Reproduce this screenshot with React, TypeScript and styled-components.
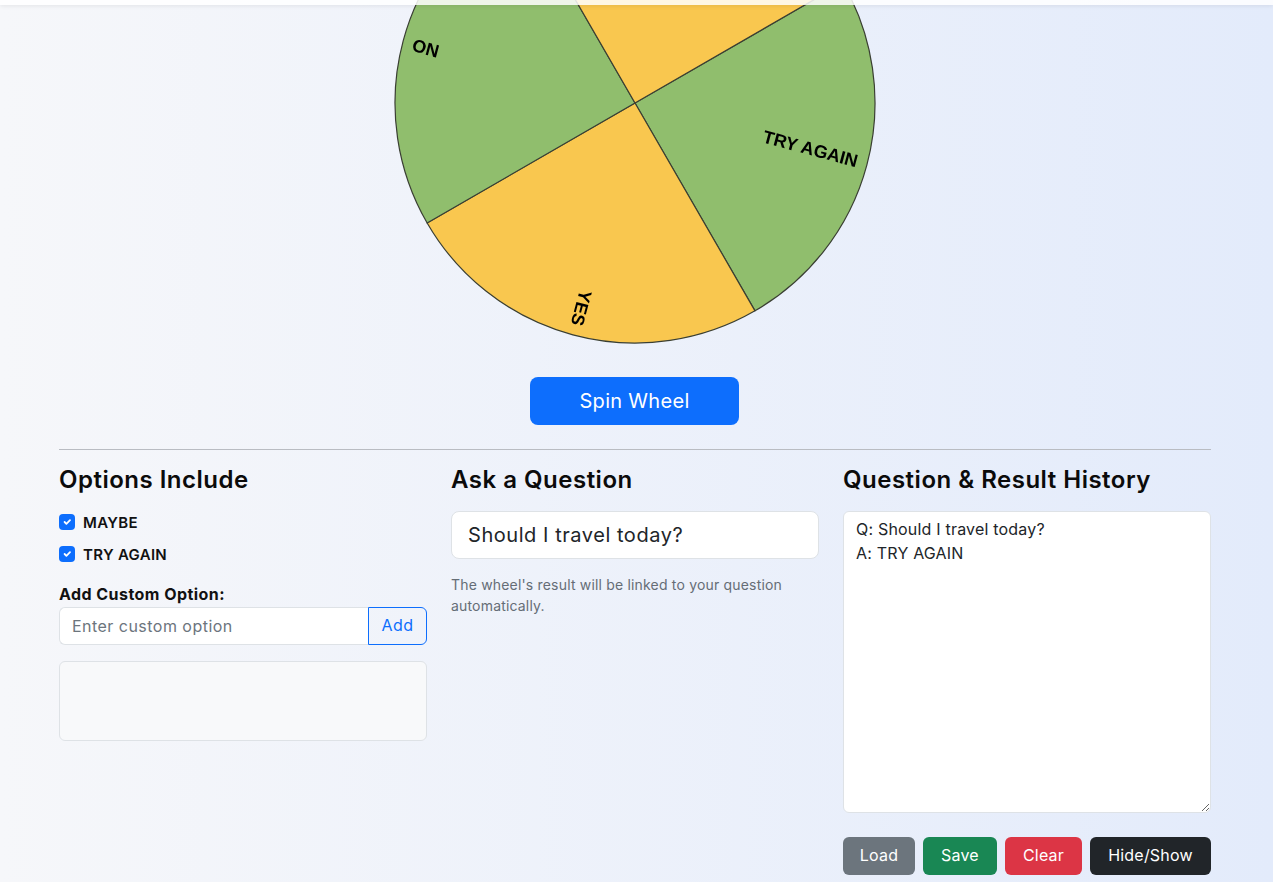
import styled, { createGlobalStyle } from 'styled-components';

const CX = 241;
const R = 240;

const segments = [
  { label: 'TRY AGAIN', from: -30, color: '#90be6d' },
  { label: 'YES', from: 60, color: '#f9c74f' },
  { label: 'NO', from: 150, color: '#90be6d' },
  { label: 'MAYBE', from: 240, color: '#f9c74f' },
];

const point = (deg: number) => {
  const a = (deg * Math.PI) / 180;
  return `${CX + R * Math.cos(a)} ${CX + R * Math.sin(a)}`;
};

const Wheel = () => (
  <WheelSvg width="482" height="482" viewBox="0 0 482 482">
    {segments.map((s) => (
      <g key={s.label}>
        <path
          d={`M${CX} ${CX} L${point(s.from)} A${R} ${R} 0 0 1 ${point(s.from + 90)} Z`}
          fill={s.color}
          stroke="#3a3f33"
          strokeWidth="1.2"
        />
        <text
          transform={`translate(${CX} ${CX}) rotate(${s.from + 45})`}
          x="230"
          dy="5"
          textAnchor="end"
          fontFamily="'Liberation Sans', Arial, sans-serif"
          fontWeight="700"
          fontSize="18"
          fill="#000"
        >
          {s.label}
        </text>
      </g>
    ))}
  </WheelSvg>
);

const Tick = () => (
  <svg width="12" height="12" viewBox="0 0 20 20">
    <path d="M6 10l3 3 6-6" fill="none" stroke="#fff" strokeWidth="3" strokeLinecap="round" strokeLinejoin="round" />
  </svg>
);

const App = () => {
  return (
    <>
      <GlobalStyle />
      <TopBar />
      <Page>
        <WheelArea>
          <Wheel />
        </WheelArea>
        <SpinRow>
          <SpinButton>Spin Wheel</SpinButton>
        </SpinRow>
        <Divider />
        <Columns>
          <Column>
            <Heading>Options Include</Heading>
            <CheckList>
              <CheckRow>
                <CheckBox>
                  <Tick />
                </CheckBox>
                MAYBE
              </CheckRow>
              <CheckRow>
                <CheckBox>
                  <Tick />
                </CheckBox>
                TRY AGAIN
              </CheckRow>
            </CheckList>
            <AddLabel>Add Custom Option:</AddLabel>
            <InputGroup>
              <CustomInput placeholder="Enter custom option" />
              <AddButton>Add</AddButton>
            </InputGroup>
            <CustomList />
          </Column>
          <Column>
            <Heading>Ask a Question</Heading>
            <QuestionInput defaultValue="Should I travel today?" />
            <Help>The wheel's result will be linked to your question automatically.</Help>
          </Column>
          <Column>
            <Heading>Question &amp; Result History</Heading>
            <History readOnly defaultValue={'Q: Should I travel today?\nA: TRY AGAIN'} />
            <Actions>
              <ActionButton $bg="#6c757d" $w={72}>Load</ActionButton>
              <ActionButton $bg="#198754" $w={74}>Save</ActionButton>
              <ActionButton $bg="#dc3545" $w={77}>Clear</ActionButton>
              <ActionButton $bg="#212529" $w={121}>Hide/Show</ActionButton>
            </Actions>
          </Column>
        </Columns>
      </Page>
    </>
  );
};

export default App;

const font = `Inter, 'Liberation Sans', Arial, sans-serif`;

const GlobalStyle = createGlobalStyle`
  html, body {
    margin: 0;
    height: 882px;
    overflow: hidden;
  }

  body {
    background: linear-gradient(90deg, #f6f7fa 0%, #e3ebfb 100%);
    font-family: ${font};
    color: #212529;
  }

  * {
    box-sizing: border-box;
  }
`;

const TopBar = styled.div`
  position: fixed;
  top: 0;
  left: 0;
  right: 0;
  z-index: 5;
  height: 5px;
  background: rgba(255, 255, 255, 0.85);
  box-shadow: 0 1px 4px rgba(0, 0, 0, 0.08);
`;

const Page = styled.div`
  width: 1152px;
  margin-left: 59px;
`;

const WheelArea = styled.div`
  height: 344px;
  overflow: hidden;
  display: flex;
  justify-content: center;
  align-items: flex-end;
`;

const WheelSvg = styled.svg`
  flex: none;
  filter: blur(0.25px);
`;

const SpinRow = styled.div`
  display: flex;
  justify-content: center;
  margin-top: 33px;
`;

const SpinButton = styled.button`
  width: 209px;
  height: 48px;
  margin-right: 1px;
  border: none;
  border-radius: 8px;
  background: #0d6efd;
  color: #fff;
  font-family: ${font};
  font-size: 20px;
  letter-spacing: 0.3px;
`;

const Divider = styled.hr`
  margin: 24px 0 15px;
  border: none;
  border-top: 1px solid #b9bcc2;
`;

const Columns = styled.div`
  display: grid;
  grid-template-columns: repeat(3, 368px);
  gap: 24px;
`;

const Column = styled.div`
  display: flex;
  flex-direction: column;
`;

const Heading = styled.h2`
  margin: 0 0 17px;
  font-size: 24px;
  line-height: 29px;
  font-weight: 600;
  letter-spacing: 0.5px;
  color: #0b0b0b;
`;

const CheckList = styled.div`
  display: flex;
  flex-direction: column;
  gap: 8px;
  margin-top: -1px;
`;

const CheckRow = styled.label`
  display: flex;
  align-items: center;
  gap: 8px;
  height: 24px;
  font-size: 15px;
  font-weight: 600;
  letter-spacing: 0.3px;
  color: #111;
`;

const CheckBox = styled.span`
  width: 16px;
  height: 16px;
  border-radius: 4px;
  background: #0d6efd;
  display: flex;
  align-items: center;
  justify-content: center;
`;

const AddLabel = styled.div`
  margin-top: 16px;
  font-size: 16px;
  line-height: 24px;
  font-weight: 700;
  letter-spacing: 0.45px;
  color: #111;
`;

const InputGroup = styled.div`
  display: flex;
  height: 38px;
  margin-top: 1px;
`;

const CustomInput = styled.input`
  flex: 1;
  min-width: 0;
  padding: 0 12px 1px;
  border: 1px solid #dee2e6;
  border-right: none;
  border-radius: 6px 0 0 6px;
  background: #fff;
  font-family: ${font};
  font-size: 16px;
  letter-spacing: 0.47px;
  color: #212529;

  &::placeholder {
    color: #6c757d;
    opacity: 1;
  }
`;

const AddButton = styled.button`
  width: 59px;
  padding: 0 0 2px;
  border: 1px solid #0d6efd;
  border-radius: 0 6px 6px 0;
  background: transparent;
  color: #0d6efd;
  font-family: ${font};
  font-size: 16px;
  letter-spacing: 0.5px;
`;

const CustomList = styled.div`
  height: 80px;
  margin-top: 16px;
  border: 1px solid #dee2e6;
  border-radius: 6px;
  background: #f8f9fa;
`;

const QuestionInput = styled.input`
  height: 48px;
  padding: 0 16px;
  border: 1px solid #dee2e6;
  border-radius: 8px;
  background: #fff;
  font-family: ${font};
  font-size: 20px;
  letter-spacing: 0.55px;
  color: #212529;
`;

const Help = styled.p`
  margin: 15px 0 0;
  font-size: 14px;
  line-height: 21px;
  letter-spacing: 0.18px;
  color: #656d76;
`;

const History = styled.textarea`
  height: 302px;
  padding: 5px 12px;
  border: 1px solid #dee2e6;
  border-radius: 6px;
  background: #fff;
  font-family: ${font};
  font-size: 16px;
  line-height: 24px;
  letter-spacing: 0.2px;
  color: #212529;
  resize: vertical;
`;

const Actions = styled.div`
  display: flex;
  gap: 8px;
  margin-top: 24px;
`;

const ActionButton = styled.button<{ $bg: string; $w: number }>`
  width: ${(p) => p.$w}px;
  height: 38px;
  padding: 0 0 2px;
  border: none;
  border-radius: 6px;
  background: ${(p) => p.$bg};
  color: #fff;
  font-family: ${font};
  font-size: 16px;
  letter-spacing: 0.2px;
`;
